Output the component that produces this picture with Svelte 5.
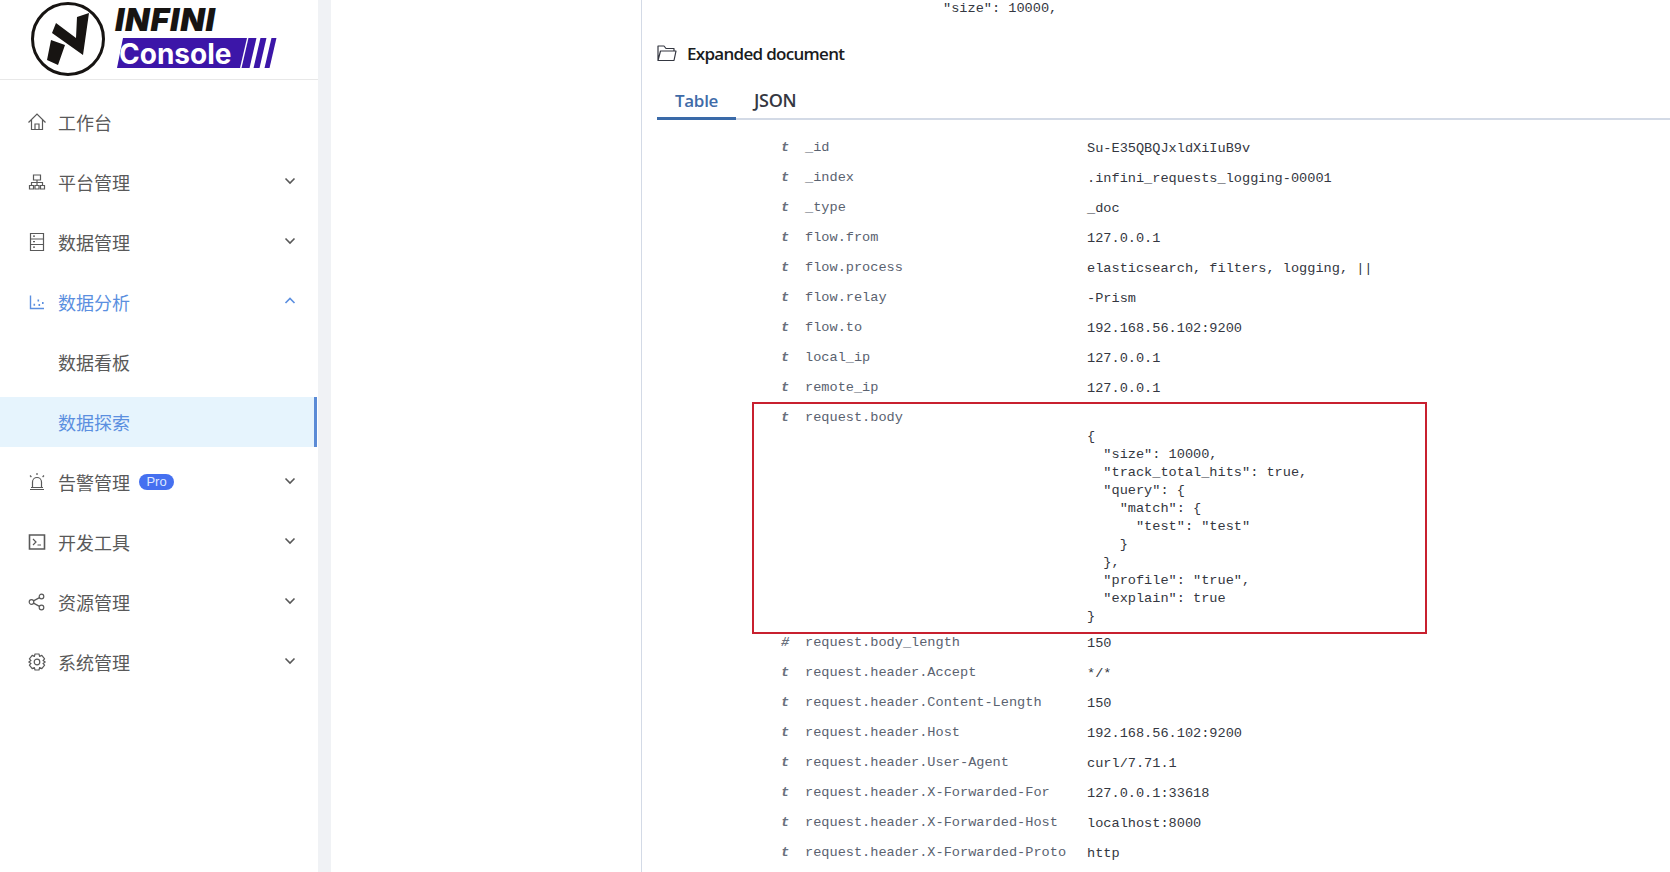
<script>
	const menu = [
		{ label: '工作台', icon: 'home' },
		{ label: '平台管理', icon: 'platform', arrow: 'down' },
		{ label: '数据管理', icon: 'data', arrow: 'down' },
		{ label: '数据分析', icon: 'chart', arrow: 'up', open: true },
		{ label: '数据看板', sub: true },
		{ label: '数据探索', sub: true, selected: true },
		{ label: '告警管理', icon: 'alarm', arrow: 'down', pro: true },
		{ label: '开发工具', icon: 'terminal', arrow: 'down' },
		{ label: '资源管理', icon: 'share', arrow: 'down' },
		{ label: '系统管理', icon: 'gear', arrow: 'down' }
	];

	const before = [
		['t', '_id', 'Su-E35QBQJxldXiIuB9v'],
		['t', '_index', '.infini_requests_logging-00001'],
		['t', '_type', '_doc'],
		['t', 'flow.from', '127.0.0.1'],
		['t', 'flow.process', 'elasticsearch, filters, logging, ||'],
		['t', 'flow.relay', '-Prism'],
		['t', 'flow.to', '192.168.56.102:9200'],
		['t', 'local_ip', '127.0.0.1'],
		['t', 'remote_ip', '127.0.0.1']
	];

	const after = [
		['#', 'request.body_length', '150'],
		['t', 'request.header.Accept', '*/*'],
		['t', 'request.header.Content-Length', '150'],
		['t', 'request.header.Host', '192.168.56.102:9200'],
		['t', 'request.header.User-Agent', 'curl/7.71.1'],
		['t', 'request.header.X-Forwarded-For', '127.0.0.1:33618'],
		['t', 'request.header.X-Forwarded-Host', 'localhost:8000'],
		['t', 'request.header.X-Forwarded-Proto', 'http']
	];

	const body = `{
  "size": 10000,
  "track_total_hits": true,
  "query": {
    "match": {
      "test": "test"
    }
  },
  "profile": "true",
  "explain": true
}`;
</script>

{#snippet row(r)}
	<div class="row">
		<span class="type">{r[0]}</span>
		<span class="field">{r[1]}</span>
		<span class="value">{r[2]}</span>
	</div>
{/snippet}

<div class="page">
	<aside class="sidebar">
		<div class="logo">
			<svg class="mark" width="76" height="76" viewBox="0 0 76 76">
				<circle cx="38" cy="38" r="35.5" fill="#fff" stroke="#171412" stroke-width="3" />
				<path d="M22 32 L26 22 L46 37 L47 16 L59 12 L53 54 Z M21 39 L35 44 L28 64 L17 59 Z" fill="#171412" />
			</svg>
			<div class="word">
				<span class="infini">INFINI</span>
				<div class="console">
					<span class="console-box">Console</span>
					<i></i><i></i><i></i>
				</div>
			</div>
		</div>

		<nav class="menu">
			{#each menu as item}
				<div class="item" class:sub={item.sub} class:open={item.open} class:selected={item.selected}>
					{#if item.icon}
						<svg class="icon" width="20" height="20" viewBox="0 0 20 20" fill="none" stroke="currentColor" stroke-width="1.2">
							{#if item.icon === 'home'}
								<path d="M1.5 10.5 L10 2 L18.5 10.5 M4.5 8 V17.5 H15.5 V8 M8 17.5 V12 H12 V17.5" />
							{:else if item.icon === 'platform'}
								<path d="M6.5 3 H13.5 V8 H6.5 Z M2.5 13.5 H6.5 V17 H2.5 Z M8 13.5 H12 V17 H8 Z M13.5 13.5 H17.5 V17 H13.5 Z M4.5 13.5 V10.5 H15.5 V13.5 M10 8 V13.5" />
							{:else if item.icon === 'data'}
								<path d="M3.5 1.5 H16.5 V18.5 H3.5 Z M3.5 7 H16.5 M3.5 12.5 H16.5 M6 4.2 H8 M6 9.7 H8 M6 15.2 H8" />
							{:else if item.icon === 'chart'}
								<path d="M3.5 3.5 V16.5 H17" stroke-width="1.4" />
								<path d="M6.5 12.8 h1.6 M10.5 8.5 h1.6 M11.5 13 h1.6 M15 11 h1.6" stroke-width="2" />
							{:else if item.icon === 'alarm'}
								<path d="M5.5 15.5 V10 A4.5 4.5 0 0 1 14.5 10 V15.5 M3 17.5 H17 M4 15.5 H16 M10 1 V3 M3 3.5 L4.4 5 M17 3.5 L15.6 5" />
							{:else if item.icon === 'terminal'}
								<path d="M2.5 3 H17.5 V17 H2.5 Z" stroke-width="1.6" />
								<path d="M6 7 L9 10 L6 13 M10.5 13 H14" />
							{:else if item.icon === 'share'}
								<circle cx="4.5" cy="10" r="2.3" />
								<circle cx="14.5" cy="4.5" r="2.3" />
								<circle cx="14.5" cy="15.5" r="2.3" />
								<path d="M6.5 8.9 L12.5 5.6 M6.5 11.1 L12.5 14.4" />
							{:else if item.icon === 'gear'}
								<path d="M8 2 H12 L12.6 4.4 L14.8 3.4 L17.6 6.8 L16 8.6 L18.2 10 L16 11.4 L17.6 13.2 L14.8 16.6 L12.6 15.6 L12 18 H8 L7.4 15.6 L5.2 16.6 L2.4 13.2 L4 11.4 L1.8 10 L4 8.6 L2.4 6.8 L5.2 3.4 L7.4 4.4 Z" stroke-linejoin="round" />
								<circle cx="10" cy="10" r="2.8" />
							{/if}
						</svg>
					{/if}
					<span class="label">{item.label}</span>
					{#if item.pro}<span class="pro">Pro</span>{/if}
					{#if item.arrow}
						<svg class="arrow" width="12" height="8" viewBox="0 0 12 8" fill="none" stroke="currentColor" stroke-width="1.6">
							{#if item.arrow === 'down'}
								<path d="M1.5 1.5 L6 6 L10.5 1.5" />
							{:else}
								<path d="M1.5 6 L6 1.5 L10.5 6" />
							{/if}
						</svg>
					{/if}
				</div>
			{/each}
		</nav>
	</aside>

	<div class="gutter"></div>
	<div class="blank"></div>

	<main class="doc">
		<pre class="top-line">"size": 10000,</pre>

		<h2 class="title">
			<svg width="20" height="18" viewBox="0 0 20 18" fill="none" stroke="#343741" stroke-width="1.2">
				<path d="M1 16.5 V2 H7 L9 4.5 H17 V7 M1 16.5 L3.5 7 H19 L17 16.5 Z" stroke-linejoin="round" />
			</svg>
			Expanded document
		</h2>

		<div class="tabs">
			<span class="tab active">Table</span>
			<span class="tab">JSON</span>
		</div>

		<div class="table">
			{#each before as r}
				{@render row(r)}
			{/each}

			<div class="row body-row">
				<span class="type">t</span>
				<span class="field">request.body</span>
				<pre class="value">{body}</pre>
				<div class="highlight"></div>
			</div>

			{#each after as r}
				{@render row(r)}
			{/each}
		</div>
	</main>
</div>

<style>
	:global(body) {
		background: #fff;
		overflow: hidden;
	}

	.page {
		display: flex;
		height: 872px;
		overflow: hidden;
		background: #fff;
	}

	.sidebar {
		width: 318px;
		flex: none;
		font-family: 'Noto Sans CJK SC', sans-serif;
	}

	.logo {
		display: flex;
		height: 79px;
		padding-left: 30px;
		border-bottom: 1px solid #e8e8e8;
		overflow: hidden;
	}

	.mark {
		flex: none;
		margin-top: 1px;
	}

	.word {
		margin-left: 9px;
		font-family: Inter, sans-serif;
	}

	.infini {
		display: block;
		height: 38px;
		padding-top: 3px;
		box-sizing: border-box;
		font-size: 32px;
		line-height: 34px;
		font-weight: 900;
		font-style: italic;
		letter-spacing: 0.8px;
		color: #171412;
	}

	.console {
		display: flex;
		height: 30px;
		margin-left: 2px;
	}

	.console-box {
		width: 130px;
		box-sizing: border-box;
		background: #3c16a8;
		clip-path: polygon(6px 0, 100% 0, calc(100% - 7px) 100%, 0 100%);
		color: #fff;
		font-size: 28px;
		line-height: 33px;
		font-weight: 700;
		padding-left: 2px;
	}

	.console i {
		width: 6px;
		margin-left: 4px;
		background: #3c16a8;
		transform: skewX(-13deg);
	}

	.console i:nth-of-type(1) {
		width: 8px;
		margin-left: -2.5px;
	}

	.console i:nth-of-type(3) {
		width: 5px;
		margin-left: 5px;
	}

	.menu {
		padding-top: 17px;
	}

	.item {
		display: flex;
		align-items: center;
		height: 50px;
		margin-bottom: 10px;
		padding: 0 22px 0 27px;
		color: #595959;
		font-size: 18px;
	}

	.icon {
		flex: none;
		margin-right: 11px;
	}

	.sub {
		padding-left: 58px;
	}

	.open {
		color: #5b8fe0;
	}

	.selected {
		background: #e6f4fd;
		color: #5b8fe0;
		margin-right: 1px;
		border-right: 3px solid #5b8bd6;
	}

	.pro {
		margin-left: 9px;
		width: 35px;
		height: 16px;
		border-radius: 8px;
		background: #4570f0;
		color: #dfe8ff;
		font-family: 'Liberation Sans', sans-serif;
		font-size: 13px;
		line-height: 16px;
		text-align: center;
	}

	.arrow {
		margin-left: auto;
		margin-top: -2px;
	}

	.gutter {
		width: 13px;
		flex: none;
		background: #f0f2f5;
	}

	.blank {
		width: 310px;
		flex: none;
		border-right: 1px solid #d3dae6;
	}

	.doc {
		flex: 1;
		min-width: 0;
		padding-left: 15px;
		color: #343741;
	}

	pre {
		margin: 0;
		font: inherit;
	}

	.top-line {
		height: 16px;
		padding-left: 286px;
		font-family: 'Liberation Mono', monospace;
		font-size: 13.6px;
		line-height: 18px;
	}

	.title {
		display: flex;
		align-items: center;
		gap: 10px;
		margin: 24px 0 0;
		height: 26px;
		font-family: 'Open Sans', sans-serif;
		font-size: 17px;
		font-weight: 600;
		letter-spacing: -0.7px;
		color: #1a1c21;
	}

	.tabs {
		display: flex;
		height: 34px;
		margin-top: 18px;
		border-bottom: 2px solid #d3dae6;
		font-family: 'Open Sans', sans-serif;
		font-size: 17px;
	}

	.tab {
		padding: 0 18px;
		height: 36px;
		box-sizing: border-box;
		line-height: 33px;
		font-weight: 600;
		color: #343741;
		letter-spacing: -0.3px;
	}

	.tab:not(.active) {
		font-size: 18px;
	}

	.tab.active {
		color: #3f6ba8;
		border-bottom: 3px solid #3a6aa8;
		width: 79px;
	}

	.table {
		margin-top: 14px;
		font-family: 'Liberation Mono', monospace;
		font-size: 13.6px;
	}

	.row {
		position: relative;
		display: flex;
		height: 30px;
		padding-left: 124px;
		line-height: 30px;
	}

	.type {
		width: 24px;
		flex: none;
		font-style: italic;
		font-weight: 700;
		color: #69707d;
		margin-top: -1px;
	}

	.field {
		width: 282px;
		flex: none;
		white-space: pre;
		color: #5a6270;
		margin-top: -1px;
	}

	.value {
		white-space: pre;
		color: #343741;
	}

	.body-row {
		height: 225px;
	}

	.body-row pre {
		padding-top: 24px;
		font-family: 'Liberation Mono', monospace;
		font-size: 13.6px;
		line-height: 18px;
	}

	/* red annotation box drawn on top of the screenshot */
	.highlight {
		position: absolute;
		left: 95px;
		top: -2px;
		width: 675px;
		height: 232px;
		border: 2px solid #c8202f;
		box-sizing: border-box;
		pointer-events: none;
	}
</style>
